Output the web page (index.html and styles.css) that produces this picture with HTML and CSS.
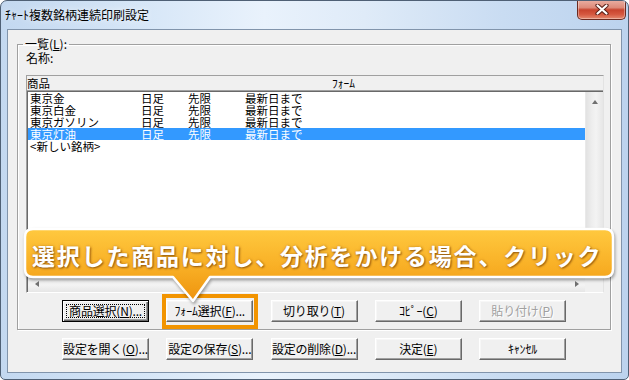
FILE: index.html
```html
<!DOCTYPE html>
<html lang="ja">
<head>
<meta charset="utf-8">
<title>ﾁｬｰﾄ複数銘柄連続印刷設定</title>
<link rel="stylesheet" href="styles.css">
</head>
<body>
<div class="window">
  <div class="titlebar">
    <span class="title">ﾁｬｰﾄ複数銘柄連続印刷設定</span>
    <div class="close">
      <svg width="14" height="11" viewBox="0 0 14 11">
        <path d="M2.5 1.5 L11.5 9.5 M11.5 1.5 L2.5 9.5" stroke="#5b2119" stroke-width="4.2" stroke-linecap="round"/>
        <path d="M2.5 1.5 L11.5 9.5 M11.5 1.5 L2.5 9.5" stroke="#ffffff" stroke-width="2.2" stroke-linecap="round"/>
      </svg>
    </div>
  </div>
  <div class="client">
    <fieldset class="group">
      <legend>一覧(<u>L</u>):</legend>
      <div class="name">名称:</div>
      <div class="listview">
        <div class="lv-header"><span class="h1">商品</span><span class="h2">ﾌｫｰﾑ</span></div>
        <div class="lv-main">
          <div class="lv-rows">
            <div class="row"><span>東京金</span><span>日足</span><span>先限</span><span>最新日まで</span></div>
            <div class="row"><span>東京白金</span><span>日足</span><span>先限</span><span>最新日まで</span></div>
            <div class="row"><span>東京ガソリン</span><span>日足</span><span>先限</span><span>最新日まで</span></div>
            <div class="row selected"><span>東京灯油</span><span>日足</span><span>先限</span><span>最新日まで</span></div>
            <div class="row"><span>&lt;新しい銘柄&gt;</span></div>
          </div>
          <div class="vscroll"><span class="arrow-up"></span></div>
        </div>
        <div class="hscroll">
          <div class="hbtn"><span class="arrow-left"></span></div>
          <div class="htrack"></div>
          <div class="hbtn"><span class="arrow-right"></span></div>
          <div class="corner"></div>
        </div>
      </div>
      <div class="btnrow">
        <div class="btn default">商品選択(<u>N</u>)...</div>
        <div class="btn">ﾌｫｰﾑ選択(<u>F</u>)...</div>
        <div class="btn">切り取り(<u>T</u>)</div>
        <div class="btn">ｺﾋﾟｰ(<u>C</u>)</div>
        <div class="btn disabled">貼り付け(<u>P</u>)</div>
      </div>
    </fieldset>
    <div class="btnrow bottom">
      <div class="btn">設定を開く(<u>O</u>)...</div>
      <div class="btn">設定の保存(<u>S</u>)...</div>
      <div class="btn">設定の削除(<u>D</u>)...</div>
      <div class="btn">決定(<u>E</u>)</div>
      <div class="btn">ｷｬﾝｾﾙ</div>
    </div>
  </div>

  <div class="highlight"></div>
  <svg class="callout-shape" width="629" height="380" viewBox="0 0 629 380">
    <defs>
      <linearGradient id="og" x1="0" y1="0" x2="0" y2="1">
        <stop offset="0" stop-color="#ffc93f"/>
        <stop offset="0.55" stop-color="#f8ae24"/>
        <stop offset="1" stop-color="#ee930e"/>
      </linearGradient>
    </defs>
    <path d="M33 229 H605 Q613 229 613 237 V269 Q613 277 605 277 H210 L193 301 L173 277 H33 Q25 277 25 269 V237 Q25 229 33 229 Z" fill="url(#og)" stroke="#ffffff" stroke-width="2.5" stroke-linejoin="round"/>
  </svg>
  <div class="callout-text">選択した商品に対し、分析をかける場合、クリック</div>
</div>
</body>
</html>
```

FILE: styles.css
```css
* { box-sizing: border-box; }
html, body { margin: 0; padding: 0; }
body {
  width: 629px;
  height: 380px;
  overflow: hidden;
  background: #ffffff;
  font-family: "Noto Sans CJK JP", "Noto Sans", sans-serif;
  font-size: 12px;
  color: #000;
}

.window {
  position: relative;
  width: 629px;
  height: 380px;
  border: 1px solid #4f6075;
  border-radius: 7px 7px 5px 5px;
  background:
    linear-gradient(90deg, #c3d8f0 0%, #d6e6f7 22%, #e9f2fc 42%, #dfebf8 58%, #c9dcf2 80%, #bcd3ee 100%);
  display: flex;
  flex-direction: column;
  overflow: hidden;
}

.titlebar {
  height: 28px;
  flex: none;
  display: flex;
  align-items: flex-start;
}
.title {
  margin: 7px 0 0 4px;
  font-size: 12px;
  line-height: 14px;
  color: #000;
  text-shadow: 0 0 6px rgba(255,255,255,0.9);
}
.close {
  width: 49px;
  height: 20px;
  margin: -1px 2px 0 auto;
  border: 1px solid #6b2a20;
  border-top: none;
  border-radius: 0 0 5px 5px;
  background: linear-gradient(#eab0a4 0%, #dd8a79 40%, #c8442e 52%, #d5573f 75%, #e48a70 100%);
  box-shadow: inset 0 0 0 1px rgba(255,255,255,0.35);
  display: flex;
  align-items: center;
  justify-content: center;
}

.client {
  flex: none;
  height: 344px;
  margin: 0 6px 6px 6px;
  border: 1px solid #8194ab;
  background: #f0f0f0;
  display: flex;
  flex-direction: column;
}

.group {
  margin: 7px 10px 0 9px;
  padding: 0 6px 7px 8px;
  border: 1px solid #a0a0a0;
  box-shadow: inset 1px 1px 0 #ffffff, 1px 1px 0 #ffffff;
  min-width: 0;
}
.group legend {
  padding: 0 2px;
  margin-left: -3px;
  font-size: 12px;
  line-height: 14px;
}
.name {
  font-size: 12px;
  line-height: 14px;
  height: 14px;
  margin-bottom: 10px;
}

.listview {
  width: 578px;
  height: 218px;
  border: 1px solid;
  border-color: #a0a0a0 #e3e3e3 #ffffff #a0a0a0;
  background: #ffffff;
  display: flex;
  flex-direction: column;
  font-size: 11.5px;
}
.lv-header {
  height: 15px;
  flex: none;
  background: #f0f0f0;
  border-bottom: 1px solid #a0a0a0;
  display: flex;
  line-height: 14px;
}
.lv-header .h1 { width: 305px; }
.lv-main {
  flex: 1;
  display: flex;
  border-top: 1px solid #696969;
  border-left: 1px solid #696969;
  min-height: 0;
}
.lv-rows {
  flex: 1;
  padding-top: 0;
}
.row {
  display: grid;
  grid-template-columns: 111px 47px 57px 1fr;
  height: 12px;
  line-height: 12px;
  padding-left: 2px;
  white-space: nowrap;
}
.row.selected {
  background: #3399ff;
  color: #ffffff;
}
.vscroll {
  width: 18px;
  flex: none;
  background: linear-gradient(90deg, #e2e2e2 0%, #eeeeee 35%, #f3f3f3 60%, #e6e6e6 100%);
  border-left: 1px solid #e9e9e9;
  position: relative;
  display: flex;
  justify-content: center;
  padding-top: 8px;
}
.arrow-up {
  width: 0; height: 0;
  border-left: 3.5px solid transparent;
  border-right: 3.5px solid transparent;
  border-bottom: 4px solid #707070;
}
.hscroll {
  height: 17px;
  flex: none;
  display: flex;
  border-left: 1px solid #696969;
  background: linear-gradient(#e2e2e2 0%, #eeeeee 35%, #f3f3f3 60%, #e6e6e6 100%);
}
.hbtn {
  width: 17px;
  flex: none;
  display: flex;
  align-items: center;
  justify-content: center;
}
.htrack { flex: 1; }
.corner {
  width: 18px;
  flex: none;
  background: #f0f0f0;
}
.arrow-left {
  width: 0; height: 0;
  border-top: 3.5px solid transparent;
  border-bottom: 3.5px solid transparent;
  border-right: 4px solid #707070;
}
.arrow-right {
  width: 0; height: 0;
  border-top: 3.5px solid transparent;
  border-bottom: 3.5px solid transparent;
  border-left: 4px solid #707070;
}

.btnrow {
  display: grid;
  grid-template-columns: repeat(5, 87px);
  column-gap: 17.25px;
  margin-top: 7px;
  padding-left: 36px;
}
.btnrow.bottom {
  margin-top: 8px;
  padding-left: 54px;
}
.btn {
  height: 22px;
  background: #f0f0f0;
  border: 1px solid;
  border-color: #ffffff #696969 #696969 #ffffff;
  box-shadow: inset -1px -1px 0 #a0a0a0, inset 1px 1px 0 #f7f7f7;
  display: flex;
  align-items: center;
  justify-content: center;
  font-size: 12px;
  line-height: 14px;
  white-space: nowrap;
  letter-spacing: -0.2px;
}
.btn.default {
  border-color: #000000;
  box-shadow: inset 1px 1px 0 #ffffff, inset -1px -1px 0 #696969, inset -2px -2px 0 #a0a0a0;
  outline: 1px dotted #000000;
  outline-offset: -5px;
}
.btn.disabled {
  color: #a0a0a0;
  text-shadow: 1px 1px 0 #ffffff;
}

.highlight {
  position: absolute;
  left: 161px;
  top: 293px;
  width: 96px;
  height: 35px;
  border: 4px solid #f29400;
}
.callout-shape {
  position: absolute;
  left: -1px;
  top: -1px;
  filter: drop-shadow(1px 2px 1.5px rgba(0,0,0,0.35));
}
.callout-text {
  position: absolute;
  left: 24px;
  top: 228px;
  width: 589px;
  height: 48px;
  padding: 3px 0 0 7px;
  display: flex;
  align-items: center;
  font-size: 23px;
  font-weight: 700;
  letter-spacing: 1.8px;
  color: #ffffff;
  white-space: nowrap;
  text-shadow: 1px 1px 2px rgba(90,40,0,0.6), 0 0 3px rgba(120,60,0,0.35);
}
```
